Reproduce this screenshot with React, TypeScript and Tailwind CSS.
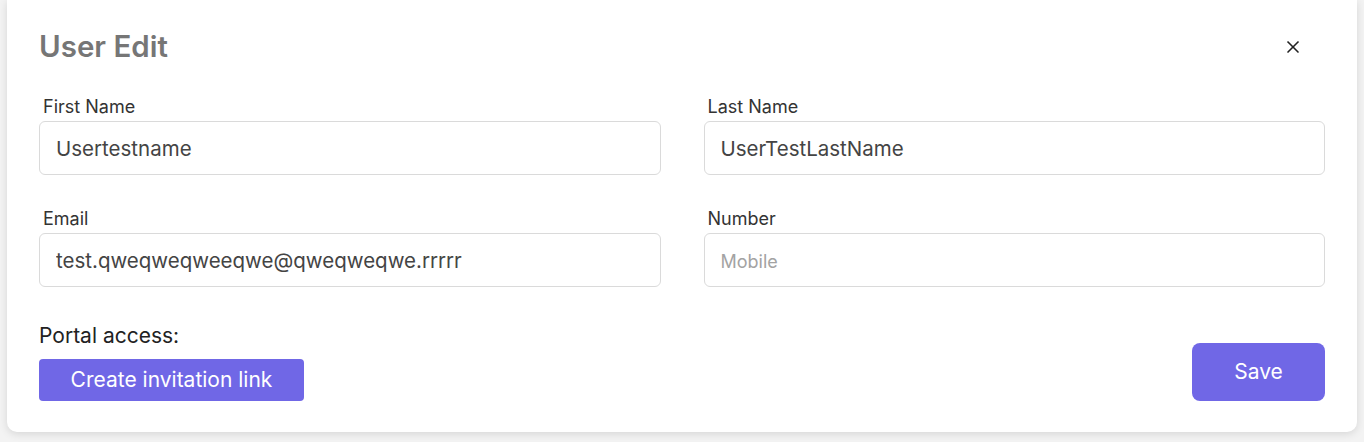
import React from "react";
import { X } from "lucide-react";

const Field = ({ label, value, placeholder }: { label: string; value?: string; placeholder?: string }) => {
    return (
        <div className="flex flex-col">
            <label className="ml-1 text-[18px] leading-[22px] text-[#333333] mb-[3px]">{label}</label>
            <input
                readOnly
                value={value ?? ""}
                placeholder={placeholder}
                className="h-[54px] w-full rounded-[6px] border border-[#dadada] bg-white px-4 text-[20.5px] text-[#444444] outline-none placeholder:text-[18px] placeholder:text-[#a3a3a3]"
            />
        </div>
    );
};

const App = () => {
    return (
        <div className="h-[442px] w-full bg-[#f3f3f3] px-[7px]" style={{ fontFamily: "Inter, 'Noto Sans', sans-serif" }}>
            <div className="rounded-b-[10px] bg-white px-8 pt-[26px] pb-[31px] shadow-[0_2px_8px_rgba(0,0,0,0.12)]">
                <div className="flex items-center justify-between">
                    <h1 className="text-[29.5px] leading-[40px] font-semibold text-[#767676]">User Edit</h1>
                    <button className="mr-[22px] mt-[2px] text-[#222222]">
                        <X size={20} strokeWidth={2} />
                    </button>
                </div>
                <div className="mt-[30px] grid grid-cols-2 gap-x-[43px] gap-y-[33px]">
                    <Field label="First Name" value="Usertestname" />
                    <Field label="Last Name" value="UserTestLastName" />
                    <Field label="Email" value="test.qweqweqweeqwe@qweqweqwe.rrrrr" />
                    <Field label="Number" placeholder="Mobile" />
                </div>
                <div className="mt-[35px] flex items-end justify-between">
                    <div className="flex flex-col">
                        <span className="text-[21px] leading-[28px] text-[#222222]">Portal access:</span>
                        <button className="mt-[9px] h-[42px] w-[265px] rounded-[4px] bg-[#7067e6] text-[21px] text-white">
                            Create invitation link
                        </button>
                    </div>
                    <button className="h-[58px] w-[133px] rounded-[8px] bg-[#7067e6] text-[21px] text-white">Save</button>
                </div>
            </div>
        </div>
    );
};

export default App;
